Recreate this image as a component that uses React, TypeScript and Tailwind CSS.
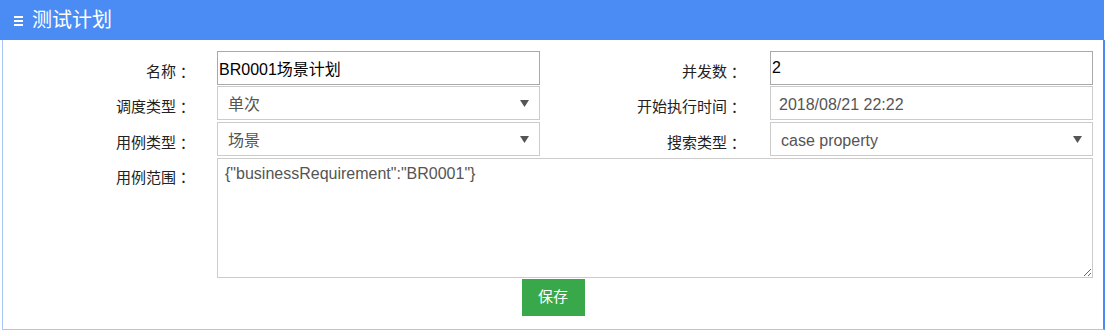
import React from "react";

const FONT = { fontFamily: '"Liberation Sans", "Noto Sans CJK SC", sans-serif' };

// full-width colon centred in its box, as the reference's font draws it
function Colon() {
  return (
    <span className="inline-block w-[15px] text-center" style={{ fontFamily: '"Noto Sans CJK TC", sans-serif' }}>
      ：
    </span>
  );
}

function Label({ text, width }: { text: string; width: string }) {
  return (
    <div className={`${width} shrink-0 flex h-[34px] items-center justify-end pt-[8px] text-[15px] text-[#222]`}>
      {text}
      <Colon />
    </div>
  );
}

function Caret() {
  return (
    <svg width="9" height="7" viewBox="0 0 9 7" className="mb-[3px] shrink-0">
      <path d="M0 0 H9 L4.5 7 Z" fill="#555" />
    </svg>
  );
}

function SelectBox({ value }: { value: string }) {
  return (
    <div className="flex h-[34px] w-[323px] shrink-0 items-center justify-between border border-[#ccc] bg-white pl-[10px] pr-[10px] pt-[4px] text-[16px] text-[#555]">
      <span>{value}</span>
      <Caret />
    </div>
  );
}

function TextInput({ value, dark }: { value: string; dark?: boolean }) {
  return (
    <input
      readOnly
      value={value}
      className={`h-[34px] w-[323px] shrink-0 border bg-white outline-none text-[16px] ${
        dark ? "border-[#a9a9a9] px-[1px] text-black" : "border-[#ccc] px-[8px] pt-[3px] text-[#555]"
      }`}
      style={FONT}
    />
  );
}

export default function App() {
  return (
    <div className="h-[334px] w-[1107px] bg-white" style={FONT}>
      <div className="flex h-[40px] w-[1104px] items-center bg-[#4a8cf4] pl-[14px] text-white">
        <svg width="9" height="10" viewBox="0 0 9 10" className="mt-[1px]">
          <rect x="0" y="0" width="9" height="2" fill="#fff" />
          <rect x="0" y="4" width="9" height="2" fill="#fff" />
          <rect x="0" y="8" width="9" height="2" fill="#fff" />
        </svg>
        <span className="ml-[9px] text-[20px] leading-none">测试计划</span>
      </div>

      <div className="ml-[2px] h-[290px] w-[1103px] border-b border-l border-r-2 border-[#a9c6f8] border-r-[#4a8cf4] pt-[11px]">
        <div className="flex">
          <Label text="名称" width="w-[188px]" />
          <div className="w-[26px] shrink-0" />
          <TextInput value="BR0001场景计划" dark />
          <Label text="并发数" width="w-[202px]" />
          <div className="w-[28px] shrink-0" />
          <TextInput value="2" dark />
        </div>

        <div className="mt-[1px] flex">
          <Label text="调度类型" width="w-[188px]" />
          <div className="w-[26px] shrink-0" />
          <SelectBox value="单次" />
          <Label text="开始执行时间" width="w-[202px]" />
          <div className="w-[28px] shrink-0" />
          <TextInput value="2018/08/21 22:22" />
        </div>

        <div className="mt-[2px] flex">
          <Label text="用例类型" width="w-[188px]" />
          <div className="w-[26px] shrink-0" />
          <SelectBox value="场景" />
          <Label text="搜索类型" width="w-[202px]" />
          <div className="w-[28px] shrink-0" />
          <SelectBox value="case property" />
        </div>

        <div className="mt-[2px] flex">
          <div className="w-[188px] shrink-0 pt-[8px] text-right text-[15px] text-[#222]">
            用例范围
            <Colon />
          </div>
          <div className="w-[26px] shrink-0" />
          <textarea
            readOnly
            defaultValue={'{"businessRequirement":"BR0001"}'}
            className="h-[120px] w-[876px] shrink-0 border border-[#ccc] px-[7px] py-[3px] text-[16px] text-[#555] outline-none"
            style={FONT}
          />
        </div>

        <div className="mt-[1px] flex justify-center">
          <button className="h-[37px] w-[63px] bg-[#38a84a] text-[15px] text-white">保存</button>
        </div>
      </div>
    </div>
  );
}
